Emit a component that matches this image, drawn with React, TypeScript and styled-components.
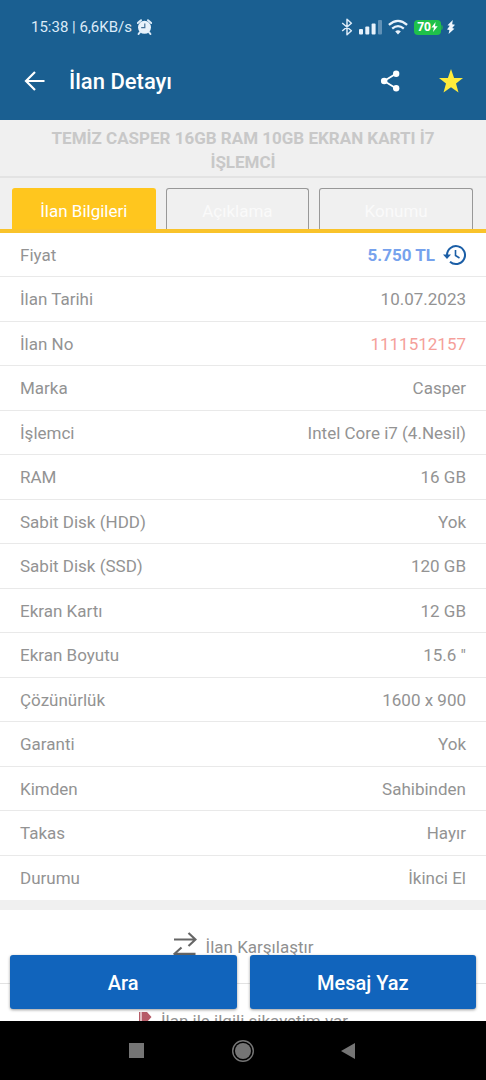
import React from 'react';
import styled, { createGlobalStyle } from 'styled-components';

const GlobalStyle = createGlobalStyle`
  *, *::before, *::after { box-sizing: border-box; }
  body { margin: 0; background: #000; }
  body, button { font-family: Roboto, "Noto Sans", sans-serif; }
  button { border: 0; padding: 0; margin: 0; background: none; color: inherit; cursor: pointer; }
  svg { display: block; flex: none; }
`;

const Screen = styled.div`
  display: flex;
  flex-direction: column;
  height: 100vh;
  overflow: hidden;
  background: #f0f0f0;
`;

const Header = styled.header`
  flex: none;
  background: #1a5f91;
  color: #fff;
`;

const StatusBar = styled.div`
  display: flex;
  align-items: center;
  justify-content: space-between;
  height: 42px;
  padding: 12px 31px 0 31px;
  color: #dcebf8;
  font-size: 15px;
  line-height: 20px;
`;

const StatusGroup = styled.div<{ $gap: number }>`
  display: flex;
  align-items: center;
  gap: ${(p) => p.$gap}px;
`;

const Battery = styled.span`
  position: relative;
  display: flex;
  align-items: center;
  justify-content: center;
  width: 27px;
  height: 15px;
  border-radius: 4px;
  background: #1fc14a;
  color: #fff;
  font: 700 12px/14px "Open Sans", sans-serif;

  &::after {
    content: '';
    position: absolute;
    top: 5px;
    right: -2px;
    width: 2px;
    height: 5px;
    border-radius: 0 2px 2px 0;
    background: #1f9a60;
  }
`;

const AppBar = styled.div`
  display: flex;
  align-items: center;
  height: 78px;
  padding: 0 22px 0 23px;
`;

const ScreenTitle = styled.h1`
  flex: 1;
  margin: 0 0 0 22px;
  padding-top: 2px;
  font-size: 22px;
  font-weight: 500;
  line-height: 28px;
`;

const IconButton = styled.button`
  display: flex;
  align-items: center;
  justify-content: center;
  height: 40px;
`;

const AppActions = styled.div`
  display: flex;
  gap: 38px;
`;

const Content = styled.main`
  position: relative;
  flex: 1;
  min-height: 0;
  overflow: hidden;
`;

const ListingTitle = styled.h2`
  margin: 0;
  padding: 6px 40px 2px;
  border-bottom: 2px solid #e3e3e3;
  color: #c8c8c8;
  font-size: 17px;
  font-weight: 700;
  line-height: 24px;
  text-align: center;
`;

const TabList = styled.div`
  display: flex;
  gap: 10px;
  padding: 10px 13px 0 12px;
  border-bottom: 4px solid #f9c32b;
`;

const Tab = styled.button<{ $active?: boolean; $grow: number }>`
  flex: ${(p) => p.$grow} 1 0;
  height: 41px;
  padding-top: 4px;
  border: 1px solid ${(p) => (p.$active ? '#ffc61e' : '#989898')};
  border-bottom: 0;
  border-radius: 3px 3px 0 0;
  background: ${(p) => (p.$active ? '#ffc61e' : 'transparent')};
  color: ${(p) => (p.$active ? '#fff' : '#fafafa')};
  font-size: 17px;
  line-height: 24px;
`;

const Details = styled.dl`
  display: grid;
  grid-auto-rows: 44px 45px;
  margin: 0;
  background: #fff;
`;

const Row = styled.div`
  display: flex;
  align-items: center;
  justify-content: space-between;
  padding: 0 20px;
  border-bottom: 1px solid #e9e9e9;
  color: #939393;
  font-size: 17px;
  line-height: 24px;

  &:last-child { border-bottom-color: transparent; }
`;

const Label = styled.dt``;

const Value = styled.dd<{ $tone?: 'price' | 'number' }>`
  display: flex;
  align-items: center;
  gap: 8px;
  margin: 0;
  color: ${(p) => (p.$tone === 'price' ? '#76a2ed' : p.$tone === 'number' ? '#f5a09a' : 'inherit')};
  font-weight: ${(p) => (p.$tone === 'price' ? 700 : 400)};
`;

const Links = styled.section`
  margin-top: 10px;
  background: #fff;
`;

const LinkRow = styled.button`
  display: flex;
  align-items: center;
  justify-content: center;
  gap: 9px;
  width: 100%;
  height: 74px;
  border-bottom: 1px solid #e2e2e2;
  color: #909090;
  font-size: 17px;
  line-height: 24px;
`;

const ActionBar = styled.div`
  position: absolute;
  inset: auto 0 0;
  display: flex;
  gap: 13px;
  padding: 0 10px 12px;
`;

const ActionButton = styled.button`
  flex: 1;
  height: 54px;
  padding-top: 2px;
  border-radius: 3px;
  background: #1164bc;
  box-shadow: 0 1px 3px rgba(0, 0, 0, 0.4);
  color: #fff;
  font-size: 20px;
  font-weight: 500;
  line-height: 26px;
`;

const SystemNav = styled.nav`
  display: flex;
  flex: none;
  align-items: center;
  justify-content: center;
  gap: 86px;
  height: 59px;
  background: #000;
`;

const AlarmIcon = () => (
  <svg width="15" height="16" viewBox="0 0 15 16">
    <path d="M0.8 4 4 1.2M14.2 4 11 1.2M3 13.2 1.6 15M12 13.2 13.4 15" stroke="#dcebf8" strokeWidth="2" strokeLinecap="round" />
    <circle cx="7.5" cy="8.3" r="6.5" fill="#e8f2fb" />
    <path d="M7.8 4.6V8.6H4.2" fill="none" stroke="#44729a" strokeWidth="1.2" />
  </svg>
);

const BluetoothIcon = () => (
  <svg width="12" height="18" viewBox="0 0 12 18">
    <path d="M1.2 5 10.4 12.8 6 16.7V1.3L10.4 5.2 1.2 13" fill="none" stroke="#dcebf8" strokeWidth="1.5" strokeLinejoin="round" />
  </svg>
);

const SignalIcon = () => (
  <svg width="23" height="16" viewBox="0 0 23 16" fill="#e8f2fb">
    <rect x="0" y="10" width="4" height="5.5" rx="1" />
    <rect x="6.3" y="7.5" width="4" height="8" rx="1" />
    <rect x="12.6" y="4.5" width="4" height="11" rx="1" />
    <rect x="19" y="1" width="4" height="14.5" rx="1" opacity=".35" />
  </svg>
);

const WifiIcon = () => (
  <svg width="20" height="16" viewBox="0 0 20 16">
    <g fill="none" stroke="#e8f2fb" strokeWidth="2.3">
      <path d="M0.9 5.8Q10-2 19.1 5.8" />
      <path d="M4.2 9.6Q10 4.6 15.8 9.6" />
    </g>
    <path d="M7.2 12.6Q10 10 12.8 12.6L10 15.6Z" fill="#e8f2fb" />
  </svg>
);

const BoltIcon = () => (
  <svg width="8" height="14" viewBox="0 0 8 14" fill="#eef6fd">
    <path d="M5.8 0 0.5 5.2 2.8 5.8 0 9.6 2.4 10 1.6 14 7.4 8.8 5.2 8 8 4.8 5.2 4.2Z" />
  </svg>
);

const ChargeIcon = () => (
  <svg width="7" height="10" viewBox="0 0 7 10" fill="#fff">
    <path d="M4.6 0 0.4 5.6H3L2 10 6.7 4.2H4Z" />
  </svg>
);

const BackIcon = () => (
  <svg width="24" height="24" viewBox="0 0 24 24" fill="none" stroke="#fff" strokeWidth="2.2">
    <path d="M21.5 12H3.5M12 3 3 12 12 21" />
  </svg>
);

const ShareIcon = () => (
  <svg width="20" height="22" viewBox="0 0 22 24" fill="#fff">
    <path d="M17.5 4 4.5 12 17.5 20" fill="none" stroke="#fff" strokeWidth="2" />
    <circle cx="17.8" cy="4" r="3.5" />
    <circle cx="4.6" cy="12" r="3.6" />
    <circle cx="17.8" cy="20" r="3.5" />
  </svg>
);

const StarIcon = () => (
  <svg width="26" height="26" viewBox="0 0 26 26" fill="#ffeb3b">
    <path d="M13 1 16.1 9.9 25 9.9 18 15.4 20.5 24.5 13 19.2 5.5 24.5 8 15.4 1 9.9 9.9 9.9Z" />
  </svg>
);

const HistoryIcon = () => (
  <svg width="23" height="22" viewBox="0 0 23 22" fill="none" stroke="#1b5ea6" strokeWidth="2">
    <path d="M4 11A9 9 0 1 1 7 17.8" />
    <path d="M0 10.5H8L4 15Z" fill="#1b5ea6" stroke="none" />
    <path d="M12.5 6V11.5L16.5 14" strokeWidth="1.6" />
  </svg>
);

const CompareIcon = () => (
  <svg width="24" height="30" viewBox="0 0 24 30" fill="none" stroke="#666" strokeWidth="2.2">
    <path d="M1 7.5H22M15.5 1 22.5 7.5 15.5 14M22.5 21.8H2M8.5 15.5 1.5 21.8 8.5 28" />
  </svg>
);

const FlagIcon = () => (
  <svg width="14" height="20" viewBox="0 0 14 20" fill="#b65c68">
    <path d="M1 1H2.4V20H1ZM3.6 1H9L13.5 6 9 11H3.6Z" />
  </svg>
);

const details: { label: string; value: string; tone?: 'price' | 'number' }[] = [
  { label: 'Fiyat', value: '5.750 TL', tone: 'price' },
  { label: 'İlan Tarihi', value: '10.07.2023' },
  { label: 'İlan No', value: '1111512157', tone: 'number' },
  { label: 'Marka', value: 'Casper' },
  { label: 'İşlemci', value: 'Intel Core i7 (4.Nesil)' },
  { label: 'RAM', value: '16 GB' },
  { label: 'Sabit Disk (HDD)', value: 'Yok' },
  { label: 'Sabit Disk (SSD)', value: '120 GB' },
  { label: 'Ekran Kartı', value: '12 GB' },
  { label: 'Ekran Boyutu', value: '15.6 "' },
  { label: 'Çözünürlük', value: '1600 x 900' },
  { label: 'Garanti', value: 'Yok' },
  { label: 'Kimden', value: 'Sahibinden' },
  { label: 'Takas', value: 'Hayır' },
  { label: 'Durumu', value: 'İkinci El' },
];

export default function App() {
  return (
    <Screen lang="tr">
      <GlobalStyle />
      <Header>
        <StatusBar>
          <StatusGroup $gap={5}>
            <span>15:38 | 6,6KB/s</span>
            <AlarmIcon />
          </StatusGroup>
          <StatusGroup $gap={6}>
            <BluetoothIcon />
            <SignalIcon />
            <WifiIcon />
            <Battery>
              70
              <ChargeIcon />
            </Battery>
            <BoltIcon />
          </StatusGroup>
        </StatusBar>
        <AppBar>
          <IconButton aria-label="Geri"><BackIcon /></IconButton>
          <ScreenTitle>İlan Detayı</ScreenTitle>
          <AppActions>
            <IconButton aria-label="Paylaş"><ShareIcon /></IconButton>
            <IconButton aria-label="Favori"><StarIcon /></IconButton>
          </AppActions>
        </AppBar>
      </Header>
      <Content>
        <ListingTitle>TEMİZ CASPER 16GB RAM 10GB EKRAN KARTI İ7 İŞLEMCİ</ListingTitle>
        <TabList role="tablist">
          <Tab role="tab" aria-selected="true" $active $grow={14}>İlan Bilgileri</Tab>
          <Tab role="tab" aria-selected="false" $grow={14}>Açıklama</Tab>
          <Tab role="tab" aria-selected="false" $grow={15}>Konumu</Tab>
        </TabList>
        <Details>
          {details.map(({ label, value, tone }) => (
            <Row key={label}>
              <Label>{label}</Label>
              <Value $tone={tone}>
                {value}
                {tone === 'price' && <HistoryIcon />}
              </Value>
            </Row>
          ))}
        </Details>
        <Links>
          <LinkRow><CompareIcon />İlan Karşılaştır</LinkRow>
          <LinkRow><FlagIcon />İlan ile ilgili şikayetim var</LinkRow>
        </Links>
        <ActionBar>
          <ActionButton>Ara</ActionButton>
          <ActionButton>Mesaj Yaz</ActionButton>
        </ActionBar>
      </Content>
      <SystemNav>
        <IconButton aria-label="Son uygulamalar">
          <svg width="16" height="16" viewBox="0 0 16 16"><rect width="15" height="15" fill="#757575" /></svg>
        </IconButton>
        <IconButton aria-label="Ana ekran">
          <svg width="24" height="24" viewBox="0 0 24 24">
            <circle cx="12" cy="12" r="10.3" fill="none" stroke="#757575" strokeWidth="1.4" />
            <circle cx="12" cy="12" r="8" fill="#757575" />
          </svg>
        </IconButton>
        <IconButton aria-label="Geri dön">
          <svg width="16" height="18" viewBox="0 0 16 18"><path d="M14 1V17L0 9Z" fill="#757575" /></svg>
        </IconButton>
      </SystemNav>
    </Screen>
  );
}
